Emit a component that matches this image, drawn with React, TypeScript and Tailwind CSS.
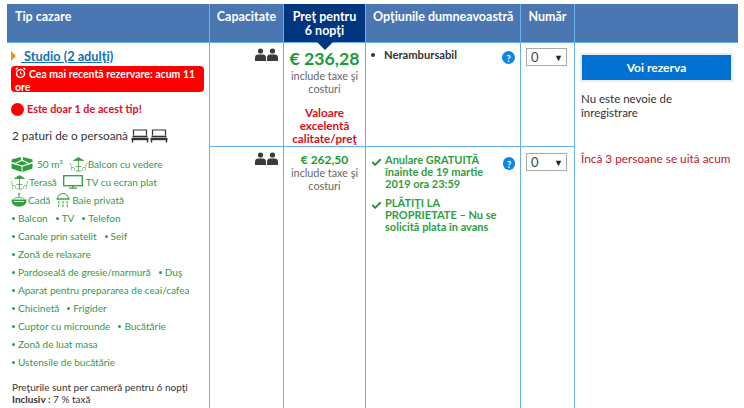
import React from 'react';
import { Check } from 'lucide-react';

const font = "font-['Lato','Open_Sans',sans-serif]";

const People = () => (
  <svg width="23" height="14" viewBox="0 0 23 14" fill="#3b3b3b">
    <circle cx="5.5" cy="3" r="2.6" />
    <circle cx="17.5" cy="3" r="2.6" />
    <path d="M0 13V9.5C0 7.5 1.5 6.5 3 6.5H8C9.5 6.5 11 7.5 11 9.5V13Z" />
    <path d="M12 13V9.5C12 7.5 13.5 6.5 15 6.5H20C21.5 6.5 23 7.5 23 9.5V13Z" />
  </svg>
);

const Bed = () => (
  <svg width="18" height="14" viewBox="0 0 18 14" fill="none" stroke="#333">
    <path d="M2.5 6.5V1H15.5V6.5" strokeWidth="1.2" />
    <path d="M1.5 7.5H16.5" strokeWidth="1.6" />
    <path d="M0.5 10H17.5" strokeWidth="2.4" />
    <path d="M1.5 11V13.5M16.5 11V13.5" strokeWidth="1.4" />
  </svg>
);

const Help = () => (
  <span className="mt-[3px] flex h-[13px] w-[13px] items-center justify-center rounded-full bg-[#0f86e0] text-[10px] font-bold leading-none text-white">
    ?
  </span>
);

const Select = () => (
  <div className="flex h-[18px] w-[41px] items-center justify-between border border-[#a9a9a9] bg-white pl-1 pr-[3px] text-[13px] leading-none text-[#444]">
    <span>0</span>
    <span className="text-[9px] text-[#222]">▼</span>
  </div>
);

const Umbrella = () => (
  <svg width="17" height="15" viewBox="0 0 17 15" fill="none" stroke="#3f9f45" strokeWidth="0.8">
    <path d="M3.5 3.5L8.5 0.5L13.5 3.5Z" fill="#2f9e3f" />
    <path d="M8.5 3.5V14M5.5 9.5H11.5M6 14H11" />
    <path d="M0.5 6C1 9 1.5 11 2 14M2 10.5H4L5 14M16.5 6C16 9 15.5 11 15 14M15 10.5H13L12 14" strokeWidth="0.6" />
  </svg>
);

const Box = () => (
  <svg width="22" height="15" viewBox="0 0 22 15" fill="#2f9e3f">
    <path d="M0.5 2.5L10 0V3L4 6L0.5 5Z" />
    <path d="M21.5 2.5L12 0V3L18 6L21.5 5Z" />
    <path d="M11 4L17 6.5L11 8.5L5 6.5Z" />
    <path d="M0.5 6.5L10.5 9.5V15L0.5 11.5Z" />
    <path d="M21.5 6.5L11.5 9.5V15L21.5 11.5Z" />
  </svg>
);

const Tv = () => (
  <svg width="20" height="14" viewBox="0 0 20 14" fill="none" stroke="#2f9e3f" strokeWidth="1.3">
    <rect x="0.7" y="0.7" width="18.6" height="10" />
    <path d="M6 13.2H14M10 11V13" />
  </svg>
);

const Tub = () => (
  <svg width="16" height="14" viewBox="0 0 16 14" fill="#2f9e3f">
    <circle cx="8" cy="1" r="0.9" />
    <path d="M8 2V4.5M2.5 6C3.5 4 12.5 4 13.5 6" fill="none" stroke="#2f9e3f" strokeWidth="0.8" />
    <path d="M0.5 6.5H15.5C15.5 11 13 13.5 8 13.5S0.5 11 0.5 6.5Z" />
    <path d="M3 8.5H13" stroke="#fff" strokeWidth="0.8" />
  </svg>
);

const Shower = () => (
  <svg width="14" height="15" viewBox="0 0 14 15" fill="none" stroke="#2f9e3f" strokeWidth="1">
    <path d="M1.5 6C1.5 2.5 4 0.5 7 0.5S12.5 2.5 12.5 6" />
    <path d="M0.5 6H13.5" strokeWidth="1.4" />
    <path d="M3 8L2.5 14.5M7 8V14.5M11 8L11.5 14.5" strokeDasharray="2.5 1" />
  </svg>
);

const Alarm = () => (
  <svg width="11" height="12" viewBox="0 0 11 12" fill="none" stroke="#fff" strokeWidth="1.4">
    <circle cx="5.5" cy="6.5" r="4" />
    <path d="M5.5 4.5V6.8H7.2" strokeWidth="1" />
    <path d="M0.8 2.4L2.6 0.8M10.2 2.4L8.4 0.8" />
  </svg>
);

const Amenity = ({ children }: { children: React.ReactNode }) => (
  <span className="flex items-center gap-[3px] whitespace-nowrap">
    <span className="h-[3px] w-[3px] rounded-full bg-[#2f9a4f]" />
    {children}
  </span>
);

const rows = [
  ['Balcon', 'TV', 'Telefon'],
  ['Canale prin satelit', 'Seif'],
  ['Zonă de relaxare'],
  ['Pardoseală de gresie/marmură', 'Duş'],
  ['Aparat pentru prepararea de ceai/cafea'],
  ['Chicinetă', 'Frigider'],
  ['Cuptor cu microunde', 'Bucătărie'],
  ['Zonă de luat masa'],
  ['Ustensile de bucătărie'],
];

const line = 'border-[#69b1ea]';
const head = `border-r ${line} bg-[#4a76b2] text-[12.5px] font-bold leading-[14px] text-white`;

export default function App() {
  return (
    <div className={`h-[408px] w-[744px] overflow-hidden bg-white pl-[7px] pt-[4px] ${font}`}>
      <div className="grid h-[404px] w-[731px] grid-cols-[203px_74px_82px_155px_54px_163px] grid-rows-[38px_105px_1fr]">
        <div className={`${head} pl-[8px] pt-[6px]`}>Tip cazare</div>
        <div className={`${head} pt-[6px] text-center`}>Capacitate</div>
        <div className={`border-r ${line} relative bg-[#003580] pt-[6px] text-center text-[12.5px] font-bold leading-[14px] text-white`}>
          Preţ pentru<br />6 nopţi
          <span className="absolute -bottom-[8px] left-1/2 h-0 w-0 -translate-x-1/2 border-x-[8px] border-t-[8px] border-x-transparent border-t-[#003580]" />
        </div>
        <div className={`${head} whitespace-nowrap pl-[7px] pt-[6px]`}>Opţiunile dumneavoastră</div>
        <div className={`${head} pt-[6px] text-center`}>Număr</div>
        <div className="bg-[#4a76b2]" />

        <div className={`row-span-2 min-h-0 border-r border-t ${line} flex flex-col pl-[4px] pr-[5px] pt-[4px]`}>
          <div className="flex items-center gap-[5px] text-[12.75px] font-bold leading-[18px] text-[#0f6fb5]">
            <span className="h-0 w-0 border-y-[5px] border-l-[5px] border-y-transparent border-l-[#e8921c]" />
            <span className="underline">&nbsp;Studio (2 adulţi)</span>
          </div>
          <div className="mt-[1px] h-[26px] rounded-[4px] bg-[#ff0000] px-[4px] pt-px text-[10.5px] font-bold leading-[12.5px] text-white">
            <span className="mr-[3px] inline-block align-[-1px]"><Alarm /></span>
            Cea mai recentă rezervare: acum 11<br />ore
          </div>
          <div className="mt-[10px] flex items-center gap-[3px] text-[10.8px] font-bold leading-[14px] text-[#d90f23]">
            <span className="h-[13px] w-[13px] rounded-full bg-[#ff0000]" />
            Este doar 1 de acest tip!
          </div>
          <div className="mt-[12px] flex items-center gap-[3px] pl-px text-[11.8px] leading-[16px] text-[#333]">
            2 paturi de o persoană
            <span className="flex gap-px"><Bed /><Bed /></span>
          </div>
          <div className="mt-[11px] flex flex-col text-[10px] leading-[18px] text-[#2f9a4f]">
            <div className="flex items-center gap-[4px]"><Box /><span>50 m²</span><span className="ml-[3px]"><Umbrella /></span><span className="-ml-[3px]">Balcon cu vedere</span></div>
            <div className="flex items-center gap-[1px]"><Umbrella /><span>Terasă</span><span className="ml-[5px]"><Tv /></span><span className="ml-[2px]">TV cu ecran plat</span></div>
            <div className="flex items-center gap-[1px]"><Tub /><span>Cadă</span><span className="ml-[5px]"><Shower /></span><span className="ml-[1px]">Baie privată</span></div>
            {rows.map((r) => (
              <div key={r[0]} className="flex gap-[8px] pl-[1px]">
                {r.map((a) => <Amenity key={a}>{a}</Amenity>)}
              </div>
            ))}
          </div>
          <div className="mt-[10px] whitespace-nowrap pl-px text-[10px] leading-[12px] text-[#333]">
            Preţurile sunt per cameră pentru 6 nopţi<br />
            <b>Inclusiv :</b> 7 % taxă
          </div>
        </div>

        <div className={`border-r border-t border-b ${line} flex justify-end pr-[5px] pt-[5px]`}><People /></div>
        <div className={`border-r border-t border-b ${line} flex flex-col items-center pt-[6px] text-center text-[10.8px] leading-[13px] text-[#666]`}>
          <div className="whitespace-nowrap text-[17.7px] font-bold leading-[20px] text-[#1a9c35]">€ 236,28</div>
          <div>include taxe şi<br />costuri</div>
          <div className="mt-[11px] text-[11.7px] font-bold leading-[13px] text-[#d4111e]">Valoare<br />excelentă<br />calitate/preţ</div>
        </div>
        <div className={`border-r border-t border-b ${line} flex items-start justify-between pl-[5px] pr-[5px] pt-[5px]`}>
          <div className="flex items-center gap-[9px] text-[11.2px] font-bold leading-[13px] text-[#333]">
            <span className="h-[4px] w-[4px] rounded-full bg-[#333]" />
            Nerambursabil
          </div>
          <Help />
        </div>
        <div className={`border-r border-t border-b ${line} pl-[5px] pt-[5px]`}><Select /></div>

        <div className={`row-span-2 border-t ${line} pl-[6px] pr-[8px] pt-[12px]`}>
          <div className="ml-px flex h-[25px] w-[149px] items-center justify-center bg-[#0071d0] text-[12px] font-bold text-white shadow-[0_0_0_2px_#e6edf5]">
            Voi rezerva
          </div>
          <div className="mt-[12px] text-[11.5px] leading-[14px] text-[#333]">Nu este nevoie de<br />înregistrare</div>
          <div className="mt-[31px] whitespace-nowrap text-[11.8px] leading-[15px] text-[#c4122e]">Încă 3 persoane se uită acum</div>
        </div>

        <div className={`border-r ${line} flex justify-end pr-[5px] pt-[5px]`}><People /></div>
        <div className={`border-r ${line} pt-[6px] text-center text-[10.8px] leading-[12.5px] text-[#666]`}>
          <div className="text-[12px] font-bold leading-[14px] text-[#1a9c35]">€ 262,50</div>
          <div>include taxe şi<br />costuri</div>
        </div>
        <div className={`border-r ${line} flex items-start justify-between pl-[5px] pr-[5px] pt-[7px]`}>
          <div className="flex flex-col gap-[7px] text-[11px] font-bold leading-[12px] text-[#2f9e3f]">
            <div className="flex gap-[3px]">
              <Check size={11} strokeWidth={4} className="mt-[3px] shrink-0 text-[#2c8a36]" />
              <span className="w-[118px]">Anulare GRATUITĂ<br />înainte de 19 martie<br />2019 ora 23:59</span>
            </div>
            <div className="flex gap-[3px]">
              <Check size={11} strokeWidth={4} className="mt-[3px] shrink-0 text-[#2c8a36]" />
              <span className="w-[118px]">PLĂTIŢI LA<br />PROPRIETATE – Nu se<br />solicită plata în avans</span>
            </div>
          </div>
          <Help />
        </div>
        <div className={`border-r ${line} pl-[5px] pt-[6px]`}><Select /></div>
      </div>
    </div>
  );
}
